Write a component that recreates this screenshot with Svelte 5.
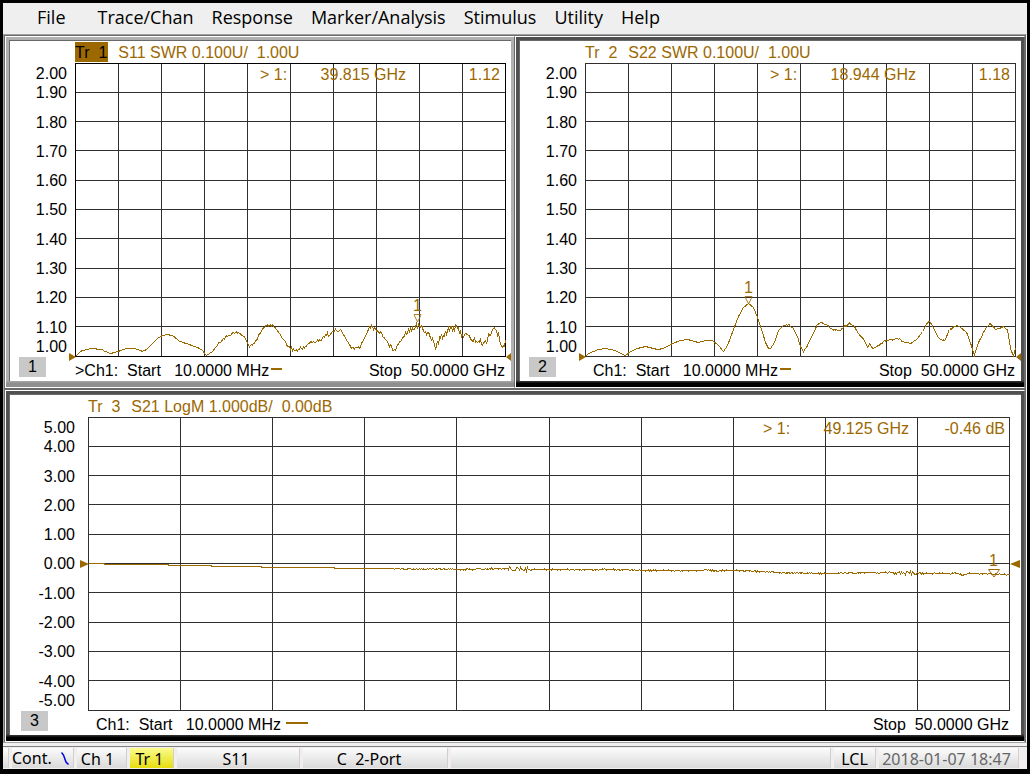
<script lang="ts">
	type Point = [number, number];
	type Plot = {
		id: number;
		selected: boolean;
		size: 'half' | 'full';
		title: string;
		labels: string[];
		freq: string;
		value: string;
		width: number;
		refY: number;
		marker: Point;
		points: Point[];
		noise: (x: number) => number;
	};

	const HEIGHT = 294;
	const swrLabels = ['2.00', '1.90', '1.80', '1.70', '1.60', '1.50', '1.40', '1.30', '1.20', '1.10', '1.00'];
	const dbLabels = ['5.00', '4.00', '3.00', '2.00', '1.00', '0.00', '-1.00', '-2.00', '-3.00', '-4.00', '-5.00'];
	const menus = ['File', 'Trace/Chan', 'Response', 'Marker/Analysis', 'Stimulus', 'Utility', 'Help'];

	const s11: Point[] = [
		[0, 293], [5, 288], [10, 286], [17, 285], [26, 286], [30, 288], [35, 290], [39, 289], [45, 287], [51, 285],
		[57, 285], [62, 286], [67, 288], [71, 286], [77, 280], [82, 275], [87, 272], [92, 271], [97, 272], [103, 277],
		[110, 280], [120, 283], [127, 287], [131, 292], [137, 288], [142, 281], [147, 276], [153, 272], [159, 269],
		[165, 270], [170, 275], [174, 283], [178, 280], [182, 275], [186, 267], [191, 262], [197, 262], [202, 267],
		[208, 276], [213, 283], [217, 286], [221, 287], [228, 284], [235, 279], [243, 278], [248, 273], [257, 269],
		[262, 266], [267, 269], [271, 277], [275, 283], [279, 286], [285, 283], [288, 277], [292, 267], [295, 263],
		[300, 266], [307, 271], [312, 279], [317, 285], [320, 285], [324, 279], [328, 272], [333, 266], [338, 263],
		[343, 261], [348, 267], [355, 272], [360, 284], [365, 275], [368, 270], [375, 264], [378, 264], [387, 270],
		[393, 274], [402, 278], [410, 280], [413, 272], [418, 264], [422, 270], [425, 280], [430, 280]
	];

	const s22: Point[] = [
		[0, 293], [3, 290], [13, 286], [20, 285], [30, 287], [35, 290], [40, 292], [45, 288], [52, 285], [60, 283],
		[72, 286], [78, 285], [87, 280], [95, 277], [102, 276], [113, 279], [120, 277], [127, 277], [133, 282],
		[138, 288], [142, 282], [148, 266], [153, 253], [158, 244], [163, 240], [168, 244], [172, 254], [177, 269],
		[180, 279], [183, 285], [185, 285], [189, 279], [193, 267], [198, 262], [203, 261], [207, 264], [212, 273],
		[215, 283], [218, 288], [222, 282], [228, 269], [232, 261], [236, 259], [242, 262], [247, 266], [255, 267],
		[259, 263], [264, 260], [269, 263], [272, 269], [278, 276], [282, 284], [284, 280], [287, 285], [293, 282],
		[300, 277], [312, 275], [318, 278], [325, 280], [332, 275], [338, 266], [342, 259], [344, 258], [348, 264],
		[352, 273], [357, 277], [360, 276], [363, 268], [368, 263], [372, 262], [377, 265], [382, 271], [386, 282],
		[389, 292], [393, 279], [400, 265], [405, 260], [410, 266], [418, 263], [422, 267], [425, 284], [428, 293],
		[430, 285]
	];

	const s21: Point[] = [
		[0, 146], [14, 146], [18, 147], [62, 147], [100, 148], [200, 150], [300, 151], [382, 152], [412, 151], [440, 152],
		[520, 152], [560, 153], [655, 153], [690, 155], [735, 156], [800, 155], [830, 156], [870, 156], [874, 158],
		[880, 156], [921, 157]
	];

	const plots: Plot[] = [
		{
			id: 1, selected: true, size: 'half', title: 'S11 SWR 0.100U/  1.00U', labels: swrLabels,
			freq: '39.815 GHz', value: '1.12', width: 431, refY: 293, marker: [342, 260], points: s11,
			noise: (x) => (x < 140 ? 0.2 : x < 210 ? 1 : x < 330 ? 2 : 4)
		},
		{
			id: 2, selected: false, size: 'half', title: 'S22 SWR 0.100U/  1.00U', labels: swrLabels,
			freq: '18.944 GHz', value: '1.18', width: 431, refY: 293, marker: [163, 242], points: s22,
			noise: (x) => (x < 200 ? 0 : 0.7)
		},
		{
			id: 3, selected: false, size: 'full', title: 'S21 LogM 1.000dB/  0.00dB', labels: dbLabels,
			freq: '49.125 GHz', value: '-0.46 dB', width: 922, refY: 146, marker: [905, 161], points: s21,
			noise: (x) => (x < 300 ? 0 : (x > 415 && x < 440) || (x > 800 && x < 830) ? 2 : 0.7)
		}
	];

	// repeatable jitter in the range -1..1
	function jitter(i: number) {
		const n = Math.sin(i * 12.9898) * 43758.5453;
		return (n - Math.floor(n)) * 2 - 1;
	}

	function tracePath(plot: Plot) {
		const out: string[] = [];
		let seg = 0;
		for (let x = 0; x < plot.width; x++) {
			while (seg < plot.points.length - 2 && x > plot.points[seg + 1][0]) seg++;
			const [x0, y0] = plot.points[seg];
			const [x1, y1] = plot.points[seg + 1];
			const y = y0 + ((y1 - y0) * (x - x0)) / (x1 - x0) + jitter(x + plot.id) * plot.noise(x);
			out.push(`${x + 0.5} ${(Math.min(y, 293) + 0.5).toFixed(1)}`);
		}
		return 'M' + out.join('L');
	}

	function gridPath(width: number) {
		let d = '';
		for (let i = 0; i <= 10; i++) {
			const x = Math.round((i * (width - 1)) / 10) + 0.5;
			const y = Math.floor((i * (HEIGHT - 1)) / 10) + 0.5;
			d += `M${x} 0V${HEIGHT}M0 ${y}H${width}`;
		}
		return d;
	}
</script>

<div class="analyzer">
	<nav class="menubar">
		{#each menus as menu}
			<button type="button">{menu}</button>
		{/each}
	</nav>

	<main class="plots">
		{#each plots as plot}
			<section class="panel {plot.size}" class:selected={plot.selected}>
				<div class="screen">
					<header class="title">
						<span class="tag">Tr  {plot.id}</span>
						<span>{plot.title}</span>
					</header>

					<div class="labels">
						{#each plot.labels as label}
							<span>{label}</span>
						{/each}
					</div>

					<div class="graph">
						<svg class="curves" viewBox="0 0 {plot.width} {HEIGHT}" preserveAspectRatio="none">
							<path class="grid" d={gridPath(plot.width)} />
							{#if plot.selected}
								<path class="frame" d="M0.5 0.5H{plot.width - 0.5}V{HEIGHT - 0.5}H0.5Z" />
							{/if}
							<path class="trace" d={tracePath(plot)} />
						</svg>
						<svg class="ref left" style="top: {((plot.refY + 0.5) / HEIGHT) * 100}%" viewBox="0 0 9 8" preserveAspectRatio="none">
							<path d="M0 0V8L9 4Z" />
						</svg>
						<svg class="ref right" style="top: {((plot.refY + 0.5) / HEIGHT) * 100}%" viewBox="0 0 10 8" preserveAspectRatio="none">
							<path d="M10 0V8L0 4Z" />
						</svg>
						<div
							class="marker"
							style="left: {((plot.marker[0] + 0.5) / plot.width) * 100}%; top: {(plot.marker[1] / HEIGHT) * 100}%"
						>
							<span>1</span>
							<svg viewBox="0 0 12 9" preserveAspectRatio="none"><path d="M0.5 0.5H11.5L6 8Z" /></svg>
						</div>
						<div class="readout">
							<div class="stimulus"><span>&gt; 1:</span><span>{plot.freq}</span></div>
							<span class="value">{plot.value}</span>
						</div>
					</div>

					<div class="corner"><span class="badge">{plot.id}</span></div>
					<footer class="sweep">
						<span class="start">{plot.selected ? '>' : ''}Ch1:  Start   10.0000 MHz</span>
						<i class="key"></i>
						<span class="stop">Stop  50.0000 GHz</span>
					</footer>
				</div>
			</section>
		{/each}
	</main>

	<footer class="status">
		<span class="cell edge"></span>
		<span class="cell sweep-mode">
			Cont.
			<svg width="8" height="13" viewBox="0 0 8 13"><path d="M0.5 0.5L2.5 3L5 10L7.5 12.5" /></svg>
		</span>
		<span class="cell channel">Ch 1</span>
		<span class="cell active">Tr 1</span>
		<span class="cell param">S11</span>
		<span class="cell cal">C  2-Port</span>
		<span class="cell message"></span>
		<span class="cell local">LCL</span>
		<span class="cell clock">2018-01-07 18:47</span>
	</footer>
</div>

<style>
	:global(body) {
		margin: 0;
		background: #000;
	}

	.analyzer {
		--trace: #9c6800;
		box-sizing: border-box;
		min-height: 100vh;
		display: flex;
		flex-direction: column;
		border: solid #000;
		border-width: 3px 3px 5px;
		background: #f0f0f0;
		color: #000;
		font: 16px/20px 'Liberation Sans', Arial, sans-serif;
	}

	.menubar {
		display: flex;
		align-items: flex-start;
		gap: 18px;
		height: 31px;
		padding-left: 34px;
		background: #efefef;
	}

	.menubar button {
		padding: 0;
		border: none;
		background: none;
		color: inherit;
		font: 18px/28px 'Open Sans', 'Noto Sans', sans-serif;
		cursor: default;
	}

	.menubar button:first-child {
		margin-right: 14px;
	}

	.plots {
		flex: 1;
		display: grid;
		grid-template-columns: 1fr 1fr;
		grid-template-rows: 1fr 1fr;
		row-gap: 2px;
		border: 1px solid #a0a0a0;
		border-right-color: #fff;
		background: #696969;
		padding: 1px 1px 0;
	}

	.panel {
		--left: 65px;
		--right: 5px;
		--label-gap: 8px;
		--badge-gap: 9px;
		--key: 11px;
		display: flex;
		border: 1px solid;
		border-color: #fff #696969 #fff #fff;
		background: linear-gradient(#505050 98%, #000 99%);
		padding: 3px 3px 6px;
	}

	.panel.selected {
		background: linear-gradient(#b0b0b0 98%, #8f8f8f 99%);
	}

	.panel.full {
		--left: 78px;
		--right: 11px;
		--label-gap: 13px;
		--badge-gap: 11px;
		--key: 22px;
		grid-column: 1 / -1;
	}

	.screen {
		flex: 1;
		display: grid;
		grid-template-columns: var(--left) 1fr var(--right);
		grid-template-rows: 22px minmax(200px, 1fr) 24px;
		border: solid #696969;
		border-width: 1px 0 0 1px;
		background: #fff;
		overflow: hidden;
		white-space: pre;
	}

	.title {
		grid-column: 2 / -1;
		display: flex;
		align-items: center;
		gap: 10px;
		color: var(--trace);
		line-height: 18px;
	}

	.title span {
		padding-top: 2px;
	}

	.tag {
		padding-right: 1px;
	}

	.selected .tag {
		background: var(--trace);
		color: #000;
	}

	/* outer labels stay inside the graph, the others sit on their grid line */
	.labels {
		contain: size;
		grid-column: 1;
		display: grid;
		grid-template-rows: minmax(0, 1fr) repeat(9, minmax(0, 2fr)) minmax(0, 1fr);
		align-items: center;
		margin: 1px 0 0;
		padding-right: var(--label-gap);
		text-align: right;
	}

	.labels span:first-child {
		align-self: start;
	}

	.labels span:last-child {
		align-self: end;
	}

	.graph {
		position: relative;
		grid-column: 2;
	}

	.curves {
		position: absolute;
		inset: 0;
		width: 100%;
		height: 100%;
		fill: none;
		shape-rendering: crispEdges;
	}

	.curves path {
		vector-effect: non-scaling-stroke;
	}

	.grid {
		stroke: #303030;
	}

	.frame {
		stroke: #000;
	}

	.trace {
		stroke: var(--trace);
	}

	.ref {
		position: absolute;
		height: 8px;
		transform: translateY(-50%);
		fill: var(--trace);
	}

	.ref.left {
		right: 100%;
		width: 9px;
		margin-right: -1px;
	}

	.ref.right {
		left: 100%;
		width: 10px;
	}

	.half .ref.left {
		width: 7px;
	}

	.half .ref.right {
		width: 5px;
	}

	.marker {
		position: absolute;
		display: flex;
		flex-direction: column;
		align-items: center;
		transform: translate(-50%, -100%);
		color: var(--trace);
		line-height: 16px;
	}

	.marker svg {
		width: 12px;
		height: 9px;
		fill: none;
		stroke: var(--trace);
	}

	.half .marker svg {
		width: 8px;
	}

	.readout {
		position: absolute;
		top: 2px;
		right: 6px;
		display: flex;
		color: var(--trace);
	}

	.full .readout {
		right: 5px;
	}

	.stimulus {
		width: 146px;
		display: flex;
		justify-content: space-between;
	}

	.value {
		width: 94px;
		text-align: right;
	}

	.full .value {
		width: 96px;
	}

	.corner {
		grid-column: 1;
		padding-left: var(--badge-gap);
	}

	.badge {
		display: block;
		width: 27px;
		background: #c8c8c8;
		text-align: center;
	}

	.sweep {
		display: flex;
		align-items: flex-start;
		padding-right: 1px;
		line-height: 28px;
	}

	.panel:not(.selected) .sweep {
		padding-left: 8px;
	}

	.key {
		align-self: center;
		width: var(--key);
		height: 2px;
		margin-left: 2px;
		background: var(--trace);
	}

	.full .key {
		margin-left: 5px;
	}

	.stop {
		margin-left: auto;
	}

	.status {
		display: flex;
		gap: 3px;
		height: 20px;
		margin-top: 3px;
		padding: 1px 8px 1px 0;
		border-top: 1px solid #808080;
		background: #f2eeee;
		font-family: 'Noto Sans', 'Open Sans', sans-serif;
		line-height: 22px;
		white-space: pre;
	}

	.cell {
		box-sizing: border-box;
		border-right: 1px solid #d0d0d0;
		background: linear-gradient(#fcfcfc, #dadada);
		text-align: center;
	}

	.edge {
		width: 6px;
	}

	.sweep-mode {
		width: 62px;
		display: flex;
		align-items: center;
		justify-content: space-between;
		padding-right: 4px;
		white-space: nowrap;
	}

	.sweep-mode svg {
		fill: none;
		stroke: #0000e8;
		stroke-width: 1.5;
	}

	.channel {
		width: 50px;
		padding-right: 8px;
	}

	.active {
		width: 44px;
		padding-right: 4px;
		background: linear-gradient(#fbfb8c, #e6de10);
	}

	.param {
		width: 123px;
		padding-right: 4px;
	}

	.cal {
		width: 145px;
		padding-right: 12px;
	}

	.message {
		flex: 1;
	}

	.local {
		width: 42px;
	}

	.clock {
		width: 140px;
		padding-right: 4px;
		color: #666;
	}
</style>
